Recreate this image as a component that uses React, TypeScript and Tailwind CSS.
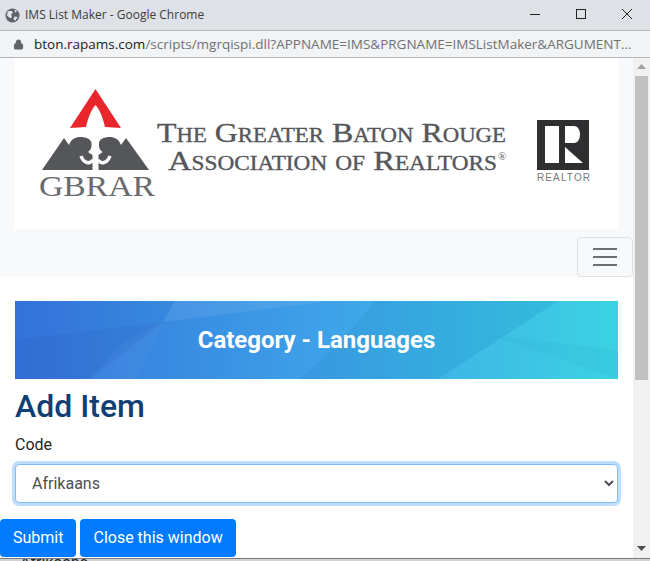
import React from "react";
import { Lock } from "lucide-react";

function Logo() {
  return (
    <svg width="603" height="171" viewBox="15 58 603 171" className="block bg-white">
      <path d="M95.5 89 L121 128 L105 127 C103 118 100 110 95.5 105 C91 110 88 118 86 127 L70 128 Z" fill="#e8262b" />
      <path d="M42 170 L64 138 L69 145 C71 139 76 137 80 137 C86 137 91 139 91.5 143 C92 147 91 150 88 152 L92.5 155 L92.5 170 Z" fill="#55565a" />
      <path d="M149 170 L126 138 L121 145 C119 139 114 137 110 137 C104 137 99.5 139 99 143 C98.5 147 99.5 150 102.5 152 L98.5 155 L98.5 170 Z" fill="#55565a" />
      <path d="M81 156 C84 164 90 164 93 160 M110 156 C107 164 101 164 98 160" fill="none" stroke="#fff" strokeWidth="3.5" />
      <text x="39" y="196" fontFamily="'Liberation Serif', serif" fontSize="29" fill="#6a6b6f" textLength="116" lengthAdjust="spacingAndGlyphs">GBRAR</text>
      <g fontFamily="'Liberation Serif', serif" fill="#55565a" stroke="#55565a" strokeWidth="0.35" fontVariant="small-caps">
        <text x="157" y="142" fontSize="28" textLength="349" lengthAdjust="spacingAndGlyphs">The Greater Baton Rouge</text>
        <text x="168" y="170" fontSize="28" textLength="329" lengthAdjust="spacingAndGlyphs">Association of Realtors</text>
      </g>
      <text x="498" y="160" fontFamily="'Liberation Serif', serif" fontSize="11" fill="#55565a">®</text>
      <rect x="537" y="120" width="52" height="50" fill="#2f2f31" />
      <rect x="545" y="126" width="14" height="37" fill="#fff" />
      <path d="M565 126 H574 C582 126 582 143 574 143 H565 Z M565 147 L583 163 H565 Z" fill="#fff" />
      <text x="537" y="181" fontFamily="'Liberation Sans', sans-serif" fontSize="10" fill="#77787c" textLength="53">REALTOR</text>
    </svg>
  );
}

function BannerArt() {
  return (
    <svg className="absolute inset-0 w-full h-full" viewBox="15 301 603 78" preserveAspectRatio="none">
      <path d="M15 340 L163 322 L90 379 L15 379 Z" fill="#1d4fb0" fillOpacity="0.16" />
      <path d="M15 301 L175 301 L163 322 L15 340 Z" fill="#1d5fc0" fillOpacity="0.06" />
      <path d="M163 322 L120 345 L90 379 L137 379 Z" fill="#fff" fillOpacity="0.03" />
      <path d="M163 322 L175 301 L330 301 Z" fill="#fff" fillOpacity="0.08" />
      <path d="M375 301 L558 301 L438 379 L300 379 Q345 340 375 301 Z" fill="#1a7fb8" fillOpacity="0.16" />
      <path d="M558 301 L618 301 L618 379 L438 379 Z" fill="#fff" fillOpacity="0.02" />
      <path d="M490 335 L618 379 L618 350 Z" fill="#1a90b8" fillOpacity="0.08" />
    </svg>
  );
}

export default function App() {
  return (
    <div className="w-[650px] h-[561px] overflow-hidden flex flex-col bg-white font-['Roboto',sans-serif] text-[#212529]">
      <div className="h-[30px] shrink-0 bg-[#dee1e6] flex items-center pl-[5px] pr-0 font-['Open_Sans',sans-serif] text-[12px] text-[#3c3c3c]">
        <svg width="15" height="15" viewBox="0 0 16 16" className="mr-[5px]">
          <circle cx="8" cy="8" r="7.5" fill="#5f6368" />
          <path d="M3 3.5 L7 3 L8.5 5 L6.5 7 L7.5 9.5 L5.5 11 L2 8 Z M10 1.5 L13 3 L11 5 Z M10 9 L13.5 9.5 L11 13.5 L9 12 Z" fill="#dee1e6" />
        </svg>
        <span>IMS List Maker - Google Chrome</span>
        <div className="ml-auto flex items-center">
          <svg width="46" height="30" viewBox="0 0 46 30"><path d="M18 14.5 H28" stroke="#222" strokeWidth="1" /></svg>
          <svg width="46" height="30" viewBox="0 0 46 30"><rect x="18.5" y="9.5" width="9" height="9" fill="none" stroke="#222" strokeWidth="1" /></svg>
          <svg width="46" height="30" viewBox="0 0 46 30"><path d="M18 9 L28 19 M28 9 L18 19" stroke="#222" strokeWidth="1" fill="none" /></svg>
        </div>
      </div>
      <div className="h-[28px] shrink-0 bg-[#f1f3f4] border-y border-y-[#b4b6b9] flex items-center pl-[13px] font-['Open_Sans',sans-serif] text-[13.5px] whitespace-nowrap overflow-hidden">
        <Lock size={11} className="text-[#5f6368] mr-[10px] shrink-0" fill="#5f6368" strokeWidth={2} />
        <span className="text-[#202124]">bton.rapams.com</span>
        <span className="text-[#6f7276]">/scripts/mgrqispi.dll?APPNAME=IMS&amp;PRGNAME=IMSListMaker&amp;ARGUMENT...</span>
      </div>
      <div className="flex flex-1 min-h-0">
        <main className="w-[633px] shrink-0 overflow-hidden">
          <div className="bg-[#f8f9fa] px-[15px] h-[219px]">
            <Logo />
            <div className="flex justify-end mr-[-15px] mt-[8px]">
              <button className="w-[56px] h-[40px] border border-[#dfe0e1] rounded-[4px] flex flex-col items-center justify-center gap-[6px]">
                <span className="block w-[24px] h-[2px] bg-[#6d6e70]" />
                <span className="block w-[24px] h-[2px] bg-[#6d6e70]" />
                <span className="block w-[24px] h-[2px] bg-[#6d6e70]" />
              </button>
            </div>
          </div>
          <div className="relative mx-[15px] mt-[24px] h-[78px] bg-gradient-to-r from-[#3573db] via-[#3ea0e8] to-[#38d2e2] flex items-center justify-center w-[603px]">
            <BannerArt />
            <h2 className="relative text-[24px] font-bold text-white">Category - Languages</h2>
          </div>
          <div className="px-[15px]">
            <h1 className="text-[32px] leading-[38px] font-medium text-[#0f3f74] mt-[8px]">Add Item</h1>
            <label className="block mt-[8px] leading-[24px]">Code</label>
            <select className="block w-full h-[39px] mt-[7px] px-3 bg-white border border-[#80bdff] rounded-[4px] text-[#495057] shadow-[0_0_0_3px_rgba(0,123,255,0.25)] outline-none">
              <option>Afrikaans</option>
            </select>
          </div>
          <div className="flex gap-[4px] mt-[16px]">
            <button className="h-[38px] px-[13px] bg-[#007bff] text-white rounded-[4px]">Submit</button>
            <button className="h-[38px] px-[13px] bg-[#007bff] text-white rounded-[4px]">Close this window</button>
          </div>
        </main>
        <aside className="w-[17px] shrink-0 bg-[#f1f1f1] flex flex-col items-center pt-[6px] pb-[7px]">
          <svg width="9" height="5" viewBox="0 0 9 5"><path d="M4.5 0 L9 5 H0 Z" fill="#a3a3a3" /></svg>
          <div className="w-[13px] h-[304px] bg-[#c1c1c1] mt-[7px]" />
          <svg width="9" height="5" viewBox="0 0 9 5" className="mt-auto"><path d="M0 0 H9 L4.5 5 Z" fill="#505050" /></svg>
        </aside>
      </div>
      <div className="h-[3px] shrink-0 overflow-hidden border-t border-t-[#7a7a7a] bg-[#d2d2d2]">
        <p className="ml-[20px] mt-[-4px] leading-[16px]">Afrikaans</p>
      </div>
    </div>
  );
}
